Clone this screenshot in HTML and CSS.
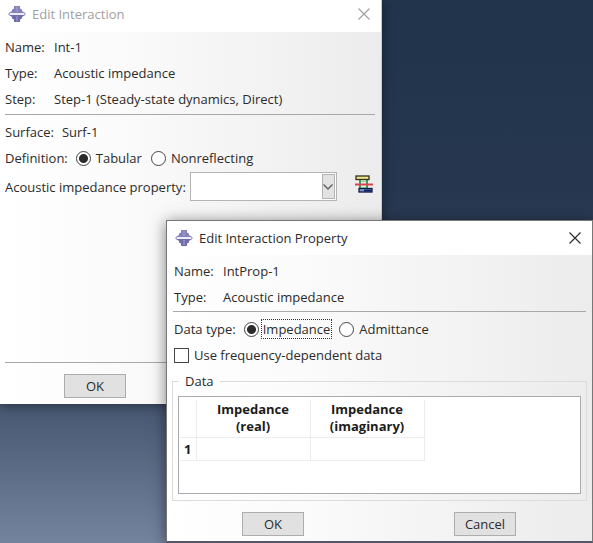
FILE: index.html
```html
<!DOCTYPE html>
<html lang="en">
<head>
<meta charset="utf-8">
<title>Edit Interaction Property</title>
<link rel="stylesheet" href="styles.css">
</head>
<body>
<svg class="defs" aria-hidden="true">
  <symbol id="app-logo" viewBox="0 0 18 18">
    <path d="M6 1h6v2.500l2 1v1.500l3 2v0.300H1V8l3-2V4.500l2-1z" fill="#8583bd"/>
    <path d="M1 9.700h16v0.300l-3 2v1.500l-2 1V17H6v-2.500l-2-1V12l-3-2z" fill="#6f6dac"/>
    <path d="M0 9l2-1.500v3zM18 9l-2-1.500v3z" fill="#7775b2"/>
    <path d="M1.500 9h15" stroke="#f4f4fc" stroke-width="1.400"/>
    <path d="M9 2v5M9 11v5" stroke="#a5a3d2"/>
  </symbol>
  <symbol id="close-mark" viewBox="0 0 12 12">
    <path d="M0.500 0.500l11 11M11.500 0.500l-11 11" fill="none" stroke="currentColor" stroke-width="1.200"/>
  </symbol>
</svg>
<main class="desktop">
  <section class="window window-back" aria-labelledby="t1">
    <header class="titlebar">
      <svg class="logo"><use href="#app-logo"/></svg>
      <h1 id="t1">Edit Interaction</h1>
      <button class="close" type="button" aria-label="Close"><svg><use href="#close-mark"/></svg></button>
    </header>
    <form class="body">
      <dl class="info">
        <dt>Name:</dt><dd>Int-1</dd>
        <dt>Type:</dt><dd>Acoustic impedance</dd>
        <dt>Step:</dt><dd>Step-1 (Steady-state dynamics, Direct)</dd>
      </dl>
      <hr>
      <div class="settings">
        <div class="row surface"><span>Surface:</span><span>Surf-1</span></div>
        <div class="row" role="radiogroup" aria-labelledby="definition">
          <span id="definition" class="group-label">Definition:</span>
          <label class="choice"><input type="radio" name="definition" checked><span>Tabular</span></label>
          <label class="choice"><input type="radio" name="definition"><span>Nonreflecting</span></label>
        </div>
        <div class="row property">
          <label for="prop">Acoustic impedance property:</label>
          <div class="combo">
            <select id="prop"><option></option></select>
            <span class="arrow"><svg viewBox="0 0 10 6"><path d="M0.500 0.500L5 5l4.500-4.500" fill="none" stroke="#666" stroke-width="1.500"/></svg></span>
          </div>
          <button class="create" type="button" aria-label="Create interaction property">
            <svg viewBox="0 0 18 18">
              <path d="M5 5v9M12 5v9" stroke="#3f9d5c" stroke-width="2"/>
              <path d="M6 6.500h5M6 12.500h5" stroke="#8fcf9f"/>
              <rect x="1" y="1" width="13" height="3.500" fill="#eee58c" stroke="#333018" stroke-width="1.300"/>
              <rect x="4" y="13.500" width="13" height="3.500" fill="#7d97cf" stroke="#101b48" stroke-width="1.300"/>
              <path d="M9 15.500h7.500" stroke="#14235e" stroke-width="2"/>
              <path d="M0 9.500h18" stroke="#d9434e" stroke-width="2"/>
            </svg>
          </button>
        </div>
      </div>
      <hr>
      <footer class="actions"><button class="push" type="button">OK</button></footer>
    </form>
  </section>

  <section class="window window-front" aria-labelledby="t2">
    <header class="titlebar">
      <svg class="logo"><use href="#app-logo"/></svg>
      <h1 id="t2">Edit Interaction Property</h1>
      <button class="close" type="button" aria-label="Close"><svg><use href="#close-mark"/></svg></button>
    </header>
    <form class="body">
      <dl class="info">
        <dt>Name:</dt><dd>IntProp-1</dd>
        <dt>Type:</dt><dd>Acoustic impedance</dd>
      </dl>
      <hr>
      <div class="settings">
        <div class="row" role="radiogroup" aria-labelledby="datatype">
          <span id="datatype" class="group-label">Data type:</span>
          <label class="choice focused"><input type="radio" name="datatype" checked><span>Impedance</span></label>
          <label class="choice"><input type="radio" name="datatype"><span>Admittance</span></label>
        </div>
        <div class="row">
          <label class="choice"><input type="checkbox"><span>Use frequency-dependent data</span></label>
        </div>
      </div>
      <fieldset>
        <legend>Data</legend>
        <div class="sheet">
          <table>
            <thead><tr><td></td><th scope="col">Impedance<br>(real)</th><th scope="col">Impedance<br>(imaginary)</th></tr></thead>
            <tbody><tr><th scope="row">1</th><td></td><td></td></tr></tbody>
          </table>
        </div>
      </fieldset>
      <footer class="actions"><button class="push" type="button">OK</button><button class="push" type="button">Cancel</button></footer>
    </form>
  </section>
</main>
</body>
</html>
```
FILE: styles.css
```css
* { box-sizing: border-box; }

body {
  margin: 0;
  font: 13px/18px "Open Sans", "Noto Sans", sans-serif;
  color: #2b2b2b;
}

button, select, input { font: inherit; color: inherit; margin: 0; }

.defs { position: absolute; width: 0; height: 0; }

.desktop {
  position: relative;
  min-height: 100vh;
  overflow: hidden;
  background: linear-gradient(#21344c 0, #26364f 35%, #465670 74%, #74839e 100%);
}

.window { position: absolute; background: #fff; }

.window-back {
  top: 0;
  left: 0;
  right: 211px;
  border-right: 1px solid #c8cdd4;
  box-shadow: 0 2px 10px rgba(0, 0, 0, 0.4);
}

.window-front {
  top: 220px;
  left: 166px;
  right: 0;
  border: 1px solid #777;
  border-bottom: 2px solid #54566a;
  box-shadow: 0 2px 14px rgba(0, 0, 0, 0.5);
}

.titlebar {
  display: flex;
  align-items: center;
  height: 32px;
  padding: 0 11px 4px 8px;
}
.window-front .titlebar { height: 34px; padding-bottom: 0; }
.titlebar h1 { flex: 1; margin: 0; font-size: 13px; font-weight: 400; }
.window-back .titlebar { color: #a0a0a0; }
.logo { width: 18px; height: 18px; margin-right: 6px; }
.close {
  display: flex;
  padding: 0;
  border: 0;
  background: none;
}
.close svg { width: 12px; height: 12px; }

.body {
  padding: 2px 6px 6px 5px;
  background: linear-gradient(90deg, #fff, #fbfbfb 30%, #ececec);
}

.info {
  display: grid;
  grid-template-columns: 49px 1fr;
  grid-auto-rows: 26px;
  align-items: center;
  margin: 0;
}
.info dd { margin: 0; }

hr { height: 1px; margin: 2px 0 0; border: 0; background: #a8a8a8; }

.row { display: flex; align-items: center; height: 26px; }
.surface { gap: 8px; }
.group-label { margin-right: 8px; }
.choice { display: flex; align-items: center; gap: 5px; margin-right: 9px; }

.window-back .settings { padding: 4px 0 158px; }
.window-front .settings { padding: 4px 0 0; }

input {
  appearance: none;
  flex: none;
  width: 15px;
  height: 15px;
  border: 1px solid #444;
  background: #fff;
}
input[type="radio"] { border-radius: 50%; }
input[type="radio"]:checked { background: radial-gradient(circle, #2b2b2b 4px, #fff 5px); }
.focused { gap: 2px; margin-right: 7px; }
.focused span { padding: 0 1px; border: 1px dotted #333; }

.row.property { height: 31px; }
.combo {
  position: relative;
  flex: none;
  width: 147px;
  height: 29px;
  margin-left: 4px;
}
.combo select {
  appearance: none;
  width: 100%;
  height: 100%;
  border: 1px solid #b4b4b4;
  border-radius: 0;
  background: #fff;
}
.arrow {
  position: absolute;
  top: 2px;
  right: 2px;
  bottom: 2px;
  display: flex;
  align-items: center;
  justify-content: center;
  width: 13px;
  border: 1px solid #b4b4b4;
  background: #e2e2e2;
  pointer-events: none;
}
.arrow svg { width: 10px; height: 6px; flex: none; }
.create {
  display: flex;
  margin: 0 2px 6px auto;
  padding: 0;
  border: 0;
  background: none;
}
.create svg { width: 18px; height: 18px; }

.push {
  width: 62px;
  height: 24px;
  padding: 0;
  border: 1px solid #adadad;
  background: #e1e1e1;
}
.window-back .actions { padding: 11px 0 0 59px; }
.window-front .actions {
  display: flex;
  justify-content: space-between;
  padding: 11px 71px 0 70px;
}
.window-front .body { padding: 3px 5px 5px; }
.window-front .info, .window-front .settings { margin-left: 2px; }
.window-front hr { margin: 1px 1px 0; }

fieldset {
  min-width: 0;
  margin: 4px 0 0;
  padding: 6px 5px;
  border: 1px solid #dcdcdc;
}
legend { margin-left: 1px; padding: 0 6px; }
.sheet {
  height: 98px;
  padding: 3px 1px;
  border: 1px solid #a9abb1;
  background: #fff;
}
table { border-collapse: collapse; color: #1c1c1c; }
th, td {
  height: 23px;
  padding: 0;
  border: 1px solid #ececec;
  border-width: 0 1px 1px 0;
}
thead td { width: 16px; }
thead th { width: 114px; height: 37px; line-height: 17px; }
th { font-weight: 700; text-align: center; }
```
